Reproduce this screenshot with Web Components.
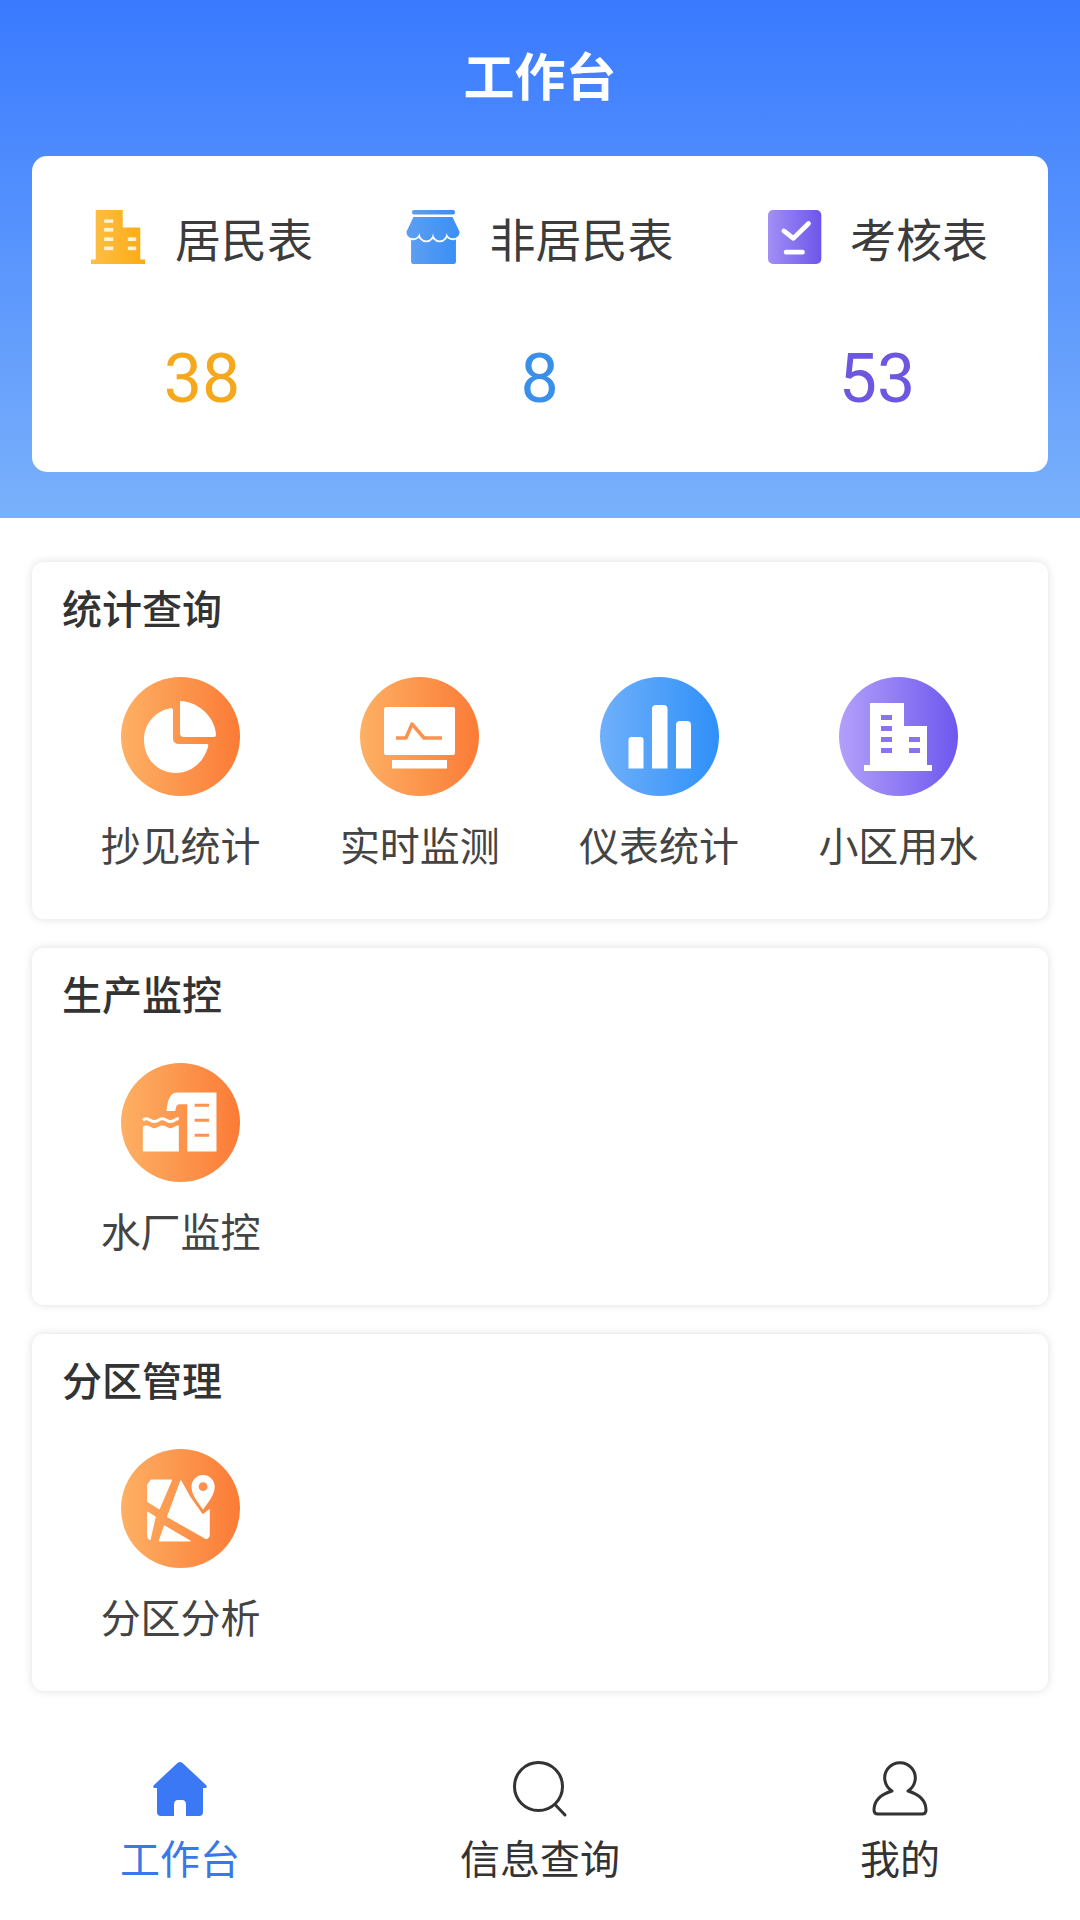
<!DOCTYPE html>
<html lang="zh">
<head>
<meta charset="utf-8">
<title>工作台</title>
<style>
  html, body { margin: 0; padding: 0; background: #fff; }
  body { font-family: "Noto Sans CJK SC", "Noto Sans", sans-serif; }
  #app { width: 1080px; height: 1920px; display: flex; flex-direction: column; overflow: hidden; }
</style>
</head>
<body>
<div id="app">
  <top-panel title-text="工作台">
    <stat-item label="居民表" value="38" color="#f6a81c">
      <svg slot="icon" viewBox="94 60 160 160">
        <defs><linearGradient id="g1"><stop offset="0" stop-color="#fdbf47"/><stop offset="1" stop-color="#fdab12"/></linearGradient></defs>
        <path fill="url(#g1)" d="M108 60h80v52h52v95h14v13H94v-13h14z"/>
        <g fill="#fff3d6">
          <rect x="133" y="88" width="27" height="10"/><rect x="133" y="113" width="27" height="11"/>
          <rect x="133" y="141" width="27" height="11"/><rect x="133" y="168" width="27" height="11"/>
          <rect x="203" y="141" width="25" height="11"/><rect x="203" y="168" width="25" height="11"/>
        </g>
      </svg>
    </stat-item>
    <stat-item label="非居民表" value="8" color="#3a8fe8">
      <svg slot="icon" viewBox="1040 60 160 160">
        <defs><linearGradient id="g2"><stop offset="0" stop-color="#5d9ff0"/><stop offset="1" stop-color="#3a8ff6"/></linearGradient></defs>
        <rect x="1058" y="60" width="127" height="13" rx="5" fill="url(#g2)"/>
        <rect x="1055" y="130" width="133" height="90" rx="7" fill="url(#g2)"/>
        <path fill="url(#g2)" stroke="#fff" stroke-width="11" paint-order="stroke" d="M1062 81H1178L1199 125a20 22 0 0 1-39 3a20 22 0 0 1-40 0a20 22 0 0 1-40 0a20 22 0 0 1-39-3z"/>
      </svg>
    </stat-item>
    <stat-item label="考核表" value="53" color="#6b57e0">
      <svg slot="icon" viewBox="85 60 160 160" style="margin: 0 -2px 0 2px">
        <defs><linearGradient id="g3"><stop offset="0" stop-color="#a28ff6"/><stop offset="1" stop-color="#6c56ea"/></linearGradient></defs>
        <rect x="85" y="60" width="158" height="160" rx="15" fill="url(#g3)"/>
        <path d="M132 122l28 22 45-44" fill="none" stroke="#fff" stroke-width="14" stroke-linecap="round" stroke-linejoin="round"/>
        <rect x="132" y="178" width="62" height="14" rx="6" fill="#fff"/>
      </svg>
    </stat-item>
  </top-panel>

  <menu-section heading="统计查询">
    <menu-entry label="抄见统计" tone="orange">
      <svg slot="icon" viewBox="0 0 119 119">
        <path fill="#fff" d="M59 24c20 1 35 17 36 34q0 2-2 2H63q-4 0-4-4z"/>
        <path fill="#fff" d="M50 31q2 0 2 3v27q0 6 6 6h28q2 0 1 3c-4 15-17 26-32 26c-18 0-32-14-32-33c0-16 11-29 27-32z"/>
      </svg>
    </menu-entry>
    <menu-entry label="实时监测" tone="orange">
      <svg slot="icon" viewBox="0 0 119 119">
        <rect x="24" y="30" width="71" height="48" rx="2" fill="#fff"/>
        <rect x="32" y="83" width="55" height="8.5" fill="#fff"/>
        <path d="M36 61h10l6-14 12 14h18" fill="none" stroke="#fb9350" stroke-width="3.5" stroke-linejoin="round"/>
      </svg>
    </menu-entry>
    <menu-entry label="仪表统计" tone="blue">
      <svg slot="icon" viewBox="0 0 119 119">
        <g fill="#fff">
          <path d="M28.500 91.500V63q0-3 3-3h9q3 0 3 3v28.500z"/>
          <path d="M52 91.500V32q0-4 4-4h7.500q4 0 4 4v59.500z"/>
          <path d="M76 91.500V48q0-4 4-4h7q4 0 4 4v43.500z"/>
        </g>
      </svg>
    </menu-entry>
    <menu-entry label="小区用水" tone="purple">
      <svg slot="icon" viewBox="0 0 119 119">
        <path fill="#fff" d="M31 26h34v23h23v39h5v6H25v-6h6z"/>
        <g fill="#8a72f4">
          <rect x="42" y="38" width="11" height="5"/><rect x="42" y="49" width="11" height="5"/>
          <rect x="42" y="60" width="11" height="5"/><rect x="42" y="71" width="11" height="5"/>
          <rect x="70" y="60" width="11" height="5"/><rect x="70" y="71" width="11" height="5"/>
        </g>
      </svg>
    </menu-entry>
  </menu-section>

  <menu-section heading="生产监控">
    <menu-entry label="水厂监控" tone="orange">
      <svg slot="icon" viewBox="68 42 354 354">
        <path fill="#fff" d="M235 130h117v175H265V165h-22q-10 0-12 12l-2 8h-26l2-14q6-41 30-41z"/>
        <path fill="#fff" d="M133 232q10-8 22 0t24 0q12-8 24 0t24 0q7-5 13-4v77H133z"/>
        <path d="M133 212q10-8 22 0t24 0q12-8 24 0t24 0q7-5 13-4" fill="none" stroke="#fff" stroke-width="9"/>
        <g stroke="#fb9350" stroke-width="9"><path d="M287 168h43M287 212h43M287 257h43"/></g>
      </svg>
    </menu-entry>
  </menu-section>

  <menu-section heading="分区管理">
    <menu-entry label="分区分析" tone="orange">
      <svg slot="icon" viewBox="70 50 348 348">
        <g fill="#fff" stroke="#fff" stroke-width="3" stroke-linejoin="round">
          <path d="M158 141h60l-36 84-34-21v-50z"/>
          <path d="M148 235l22 14-15 66q-7-2-7-14z"/>
          <path d="M245 143l28 50 36 50 19-15v74q0 8-10 10l-112-64z"/>
          <path d="M197 275l75 44h-90z"/>
        </g>
        <path fill="#fff" d="M310 228c-14-22-34-42-34-68a34 34 0 0 1 68 0c0 26-20 46-34 68z"/>
        <circle cx="310" cy="160" r="13" fill="#fb9350"/>
      </svg>
    </menu-entry>
  </menu-section>

  <bottom-nav>
    <nav-tab label="工作台" active>
      <svg slot="icon" viewBox="0 0 80 80" fill="#3a78f5">
        <path d="M37.500 13q2.500-2 5 0L66 35q2 3-1 3h-2v24q0 4-4 4H46V55q0-5-4-5h-4q-4 0-4 5v11H21q-4 0-4-4V38h-2q-3 0-1-3z"/>
      </svg>
    </nav-tab>
    <nav-tab label="信息查询">
      <svg slot="icon" viewBox="0 0 80 80" fill="none" stroke="#333" stroke-width="3">
        <circle cx="38.500" cy="36.500" r="24"/><path d="M55 54.500l10 10.500" stroke-linecap="round"/>
      </svg>
    </nav-tab>
    <nav-tab label="我的">
      <svg slot="icon" viewBox="0 0 80 80" fill="none" stroke="#333" stroke-width="3">
        <path d="M32 41A15.300 15.300 0 1 1 48 41C58 44 66 50 66 60Q66 64 62 64H18Q14 64 14 60C14 50 22 44 32 41z" stroke-linejoin="round"/>
      </svg>
    </nav-tab>
  </bottom-nav>
</div>

<script>
  const topPanelTpl = document.createElement('template');
  topPanelTpl.innerHTML = `
    <style>
      :host { display: block; height: 518px; box-sizing: border-box; padding: 0 32px;
        background: linear-gradient(180deg, #397aff 0%, #7ab1fb 100%); }
      h1 { margin: 0; height: 148px; padding-bottom: 8px; display: flex; align-items: center; justify-content: center;
        color: #fff; font-size: 51px; font-weight: 700; }
      .card { height: 316px; box-sizing: border-box; padding: 0 60px 0 59px; background: #fff; border-radius: 15px;
        display: flex; justify-content: space-between; }
    </style>
    <h1></h1>
    <div class="card"><slot></slot></div>`;
  customElements.define('top-panel', class extends HTMLElement {
    constructor() {
      super();
      this.attachShadow({ mode: 'open' }).appendChild(topPanelTpl.content.cloneNode(true));
      this.shadowRoot.querySelector('h1').textContent = this.getAttribute('title-text');
    }
  });

  const statTpl = document.createElement('template');
  statTpl.innerHTML = `
    <style>
      :host { display: flex; flex-direction: column; align-items: center; padding-top: 54px; }
      .head { display: flex; align-items: center; gap: 30px; height: 54px; }
      ::slotted(svg) { width: 54px; height: 54px; display: block; }
      .label { font-size: 46px; line-height: 54px; color: #3c3c3c; }
      .value { margin-top: 83px; font: 400 68px/64px Roboto, "Noto Sans", sans-serif; }
    </style>
    <div class="head"><slot name="icon"></slot><span class="label"></span></div>
    <div class="value"></div>`;
  customElements.define('stat-item', class extends HTMLElement {
    constructor() {
      super();
      this.attachShadow({ mode: 'open' }).appendChild(statTpl.content.cloneNode(true));
      this.shadowRoot.querySelector('.label').textContent = this.getAttribute('label');
      const v = this.shadowRoot.querySelector('.value');
      v.textContent = this.getAttribute('value');
      v.style.color = this.getAttribute('color');
    }
  });

  const sectionTpl = document.createElement('template');
  sectionTpl.innerHTML = `
    <style>
      :host { display: block; height: 357px; box-sizing: border-box; margin: 44px 32px -15px; padding: 20px 30px 0 29px;
        background: #fff; border-radius: 12px; box-shadow: 0 0 10px rgba(0, 0, 0, .13); }
      h2 { margin: 0 0 0 1px; font-size: 40px; line-height: 50px; font-weight: 500; color: #333; }
      .grid { display: grid; grid-template-columns: repeat(4, 1fr); margin-top: 45px; }
    </style>
    <h2></h2>
    <div class="grid"><slot></slot></div>`;
  customElements.define('menu-section', class extends HTMLElement {
    constructor() {
      super();
      this.attachShadow({ mode: 'open' }).appendChild(sectionTpl.content.cloneNode(true));
      this.shadowRoot.querySelector('h2').textContent = this.getAttribute('heading');
    }
  });

  const tones = {
    orange: 'linear-gradient(90deg, #fdb064, #fb7b36)',
    blue: 'linear-gradient(90deg, #6fb0fb, #2f90f8)',
    purple: 'linear-gradient(90deg, #b3a0fa, #6d58ee)'
  };
  const entryTpl = document.createElement('template');
  entryTpl.innerHTML = `
    <style>
      :host { display: flex; flex-direction: column; align-items: center; }
      .disc { width: 119px; height: 119px; border-radius: 50%; overflow: hidden; }
      ::slotted(svg) { width: 119px; height: 119px; display: block; }
      .label { margin-top: 24px; font-size: 40px; line-height: 48px; color: #444; }
    </style>
    <div class="disc"><slot name="icon"></slot></div>
    <div class="label"></div>`;
  customElements.define('menu-entry', class extends HTMLElement {
    constructor() {
      super();
      this.attachShadow({ mode: 'open' }).appendChild(entryTpl.content.cloneNode(true));
      this.shadowRoot.querySelector('.label').textContent = this.getAttribute('label');
      this.shadowRoot.querySelector('.disc').style.background = tones[this.getAttribute('tone')];
    }
  });

  const navTpl = document.createElement('template');
  navTpl.innerHTML = `
    <style>
      :host { display: grid; grid-template-columns: repeat(3, 1fr); margin-top: auto; height: 187px;
        box-sizing: border-box; padding-top: 17px; background: #fff; }
    </style>
    <slot></slot>`;
  customElements.define('bottom-nav', class extends HTMLElement {
    constructor() {
      super();
      this.attachShadow({ mode: 'open' }).appendChild(navTpl.content.cloneNode(true));
    }
  });

  const tabTpl = document.createElement('template');
  tabTpl.innerHTML = `
    <style>
      :host { display: flex; flex-direction: column; align-items: center; color: #333; }
      :host([active]) { color: #3a78e8; }
      ::slotted(svg) { width: 80px; height: 80px; display: block; }
      .label { margin-top: 3px; font-size: 40px; line-height: 48px; }
    </style>
    <slot name="icon"></slot>
    <div class="label"></div>`;
  customElements.define('nav-tab', class extends HTMLElement {
    constructor() {
      super();
      this.attachShadow({ mode: 'open' }).appendChild(tabTpl.content.cloneNode(true));
      this.shadowRoot.querySelector('.label').textContent = this.getAttribute('label');
    }
  });
</script>
</body>
</html>
